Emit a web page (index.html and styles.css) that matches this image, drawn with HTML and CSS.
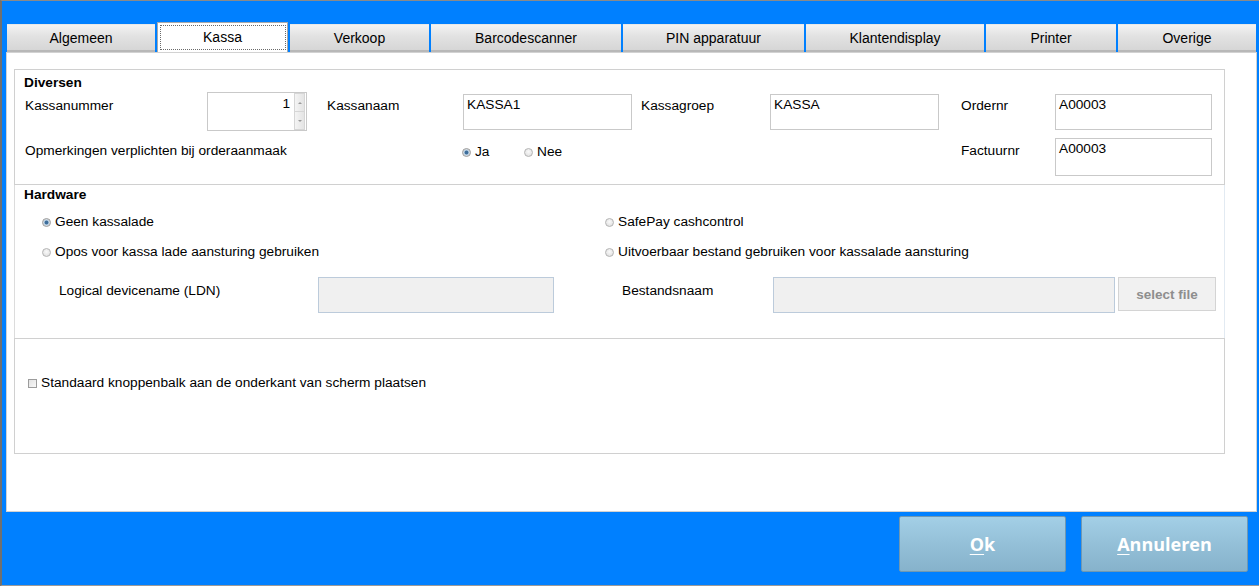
FILE: index.html
```html
<!DOCTYPE html>
<html lang="nl">
<head>
<meta charset="utf-8">
<title>Kassa instellingen</title>
<link rel="stylesheet" href="styles.css">
</head>
<body>
<div class="window">
  <div class="tabs">
    <div class="tab w-algemeen">Algemeen</div>
    <div class="tab tab-active w-kassa">Kassa</div>
    <div class="tab w-verkoop">Verkoop</div>
    <div class="tab w-barcode">Barcodescanner</div>
    <div class="tab w-pin">PIN apparatuur</div>
    <div class="tab w-klant">Klantendisplay</div>
    <div class="tab w-printer">Printer</div>
    <div class="tab w-overige">Overige</div>
  </div>

  <div class="panel">
    <div class="group diversen">
      <div class="group-title">Diversen</div>
      <div class="div-grid">
        <div class="lbl">Kassanummer</div>
        <div class="spinner">
          <span class="spin-value">1</span>
          <span class="spin-btns">
            <span class="spin-btn"><span class="arr-up"></span></span>
            <span class="spin-btn"><span class="arr-down"></span></span>
          </span>
        </div>
        <div class="lbl pl20">Kassanaam</div>
        <div class="field">KASSA1</div>
        <div class="lbl pl9">Kassagroep</div>
        <div class="field">KASSA</div>
        <div class="lbl pl22">Ordernr</div>
        <div class="field">A00003</div>

        <div class="lbl lbl-r2 span3">Opmerkingen verplichten bij orderaanmaak</div>
        <div class="radios-inline">
          <span class="opt"><span class="radio checked"></span>Ja</span>
          <span class="opt"><span class="radio"></span>Nee</span>
        </div>
        <div class="empty"></div>
        <div class="empty"></div>
        <div class="lbl lbl-r2 pl22">Factuurnr</div>
        <div class="field field-tall">A00003</div>
      </div>
    </div>

    <div class="group-plain hardware">
      <div class="group-title">Hardware</div>
      <div class="hw-radios">
        <span class="opt"><span class="radio checked"></span>Geen kassalade</span>
        <span class="opt"><span class="radio"></span>SafePay cashcontrol</span>
        <span class="opt"><span class="radio"></span>Opos voor kassa lade aansturing gebruiken</span>
        <span class="opt"><span class="radio"></span>Uitvoerbaar bestand gebruiken voor kassalade aansturing</span>
      </div>
      <div class="hw-row">
        <div class="lbl ldn-lbl">Logical devicename (LDN)</div>
        <div class="field-disabled ldn-input"></div>
        <div class="lbl file-lbl">Bestandsnaam</div>
        <div class="field-disabled file-input"></div>
        <div class="select-btn">select file</div>
      </div>
    </div>

    <div class="group options">
      <span class="opt"><span class="checkbox"></span>Standaard knoppenbalk aan de onderkant van scherm plaatsen</span>
    </div>
  </div>

  <div class="footer">
    <div class="btn"><u>O</u>k</div>
    <div class="btn"><u>A</u>nnuleren</div>
  </div>
</div>
</body>
</html>
```

FILE: styles.css
```css
html, body {
  margin: 0;
  padding: 0;
}
body {
  width: 1259px;
  height: 586px;
  overflow: hidden;
  font-family: "Liberation Sans", Arial, sans-serif;
  font-size: 13.7px;
  color: #000;
}
.window {
  box-sizing: border-box;
  width: 1259px;
  height: 586px;
  background: #0080ff;
  border-top: 1px solid #8a8a8a;
  border-left: 2px solid #707070;
  border-bottom: 1px solid #9a9a9a;
  display: flex;
  flex-direction: column;
}

/* Tabs */
.tabs {
  display: flex;
  align-items: flex-end;
  gap: 2px;
  height: 30px;
  margin: 21px 0 0 5px;
  flex: none;
}
.tab {
  box-sizing: border-box;
  height: 28px;
  background: linear-gradient(#f3f3f3, #e2e2e2 45%, #d6d6d6);
  border-top: 1px solid #e8e8e8;
  border-bottom: 2px solid #b8b8b8;
  font-size: 14px;
  display: flex;
  align-items: center;
  justify-content: center;
  padding-top: 1px;
}
.tab-active {
  position: relative;
  height: 30px;
  background: #fff;
  border: 1px solid #a9a9a9;
  border-bottom: none;
  padding-top: 0;
  padding-bottom: 1px;
}
.tab-active::after {
  content: "";
  position: absolute;
  left: 2px;
  right: 1px;
  top: 2px;
  bottom: 2px;
  border: 1px dotted #6a6a6a;
}
.w-algemeen { width: 148px; }
.w-kassa { width: 131px; }
.w-verkoop { width: 139px; }
.w-barcode { width: 190px; }
.w-pin { width: 181px; }
.w-klant { width: 178px; }
.w-printer { width: 130px; }
.w-overige { width: 138px; }

/* Panel */
.panel {
  box-sizing: border-box;
  flex: none;
  width: 1251px;
  height: 460px;
  margin-left: 4px;
  background: #fff;
  border: 1px solid #d2d2d2;
  padding: 16px 0 0 7px;
}
.group {
  box-sizing: border-box;
  width: 1211px;
  border: 1px solid #d0d0d0;
}
.group-plain {
  box-sizing: border-box;
  width: 1211px;
  border-left: 1px solid #dcdcdc;
  border-right: 1px solid #e2eaf2;
}
.group-title {
  font-weight: bold;
  font-size: 13.7px;
  line-height: 16px;
  height: 16px;
}

/* Diversen */
.diversen {
  height: 116px;
  padding: 5px 0 0 9px;
}
.div-grid {
  margin-top: 1px;
  margin-left: 1px;
  display: grid;
  grid-template-columns: 182px 100px 156px 169px 138px 169px 116px 157px;
  grid-template-rows: 39px 38px;
  row-gap: 7px;
}
.lbl {
  line-height: 16px;
  padding-top: 6px;
  white-space: nowrap;
}
.lbl-r2 { padding-top: 5px; }
.span3 { grid-column: span 3; }
.pl20 { padding-left: 20px; }
.pl9 { padding-left: 9px; }
.pl22 { padding-left: 22px; }

.field {
  box-sizing: border-box;
  align-self: start;
  margin-top: 2px;
  height: 36px;
  border: 1px solid #c9c9c9;
  padding: 2px 3px;
  line-height: 16px;
  background: #fff;
}
.field-tall {
  margin-top: 0;
  height: 38px;
}

.spinner {
  box-sizing: border-box;
  height: 39px;
  border: 1px solid #c9c9c9;
  display: flex;
  justify-content: flex-end;
  padding: 0 1px 0 0;
}
.spin-value {
  line-height: 16px;
  padding-top: 3px;
  padding-right: 4px;
}
.spin-btns {
  display: flex;
  flex-direction: column;
  width: 11px;
}
.spin-btn {
  box-sizing: border-box;
  flex: 1;
  background: linear-gradient(90deg, #f4f4f4, #e4e4e4);
  border: 1px solid #d6d6d6;
  display: flex;
  align-items: center;
  justify-content: center;
}
.spin-btn + .spin-btn { border-top: none; }
.arr-up, .arr-down {
  width: 0;
  height: 0;
  border-left: 2px solid transparent;
  border-right: 2px solid transparent;
}
.arr-up { border-bottom: 2px solid #9a9a9a; }
.arr-down { border-top: 2px solid #9a9a9a; }

.radios-inline {
  display: flex;
  align-items: flex-start;
  padding-top: 6px;
  margin-left: -1px;
  line-height: 16px;
}
.radios-inline .opt { width: 62px; }

.opt {
  display: inline-flex;
  align-items: center;
  line-height: 16px;
  white-space: nowrap;
}
.radio {
  box-sizing: border-box;
  width: 9px;
  height: 9px;
  border-radius: 50%;
  border: 1px solid #b4b4b4;
  background: radial-gradient(circle at 50% 40%, #fafafa, #dadada);
  margin-right: 4px;
  flex: none;
}
.radio.checked {
  border-color: #9a9a9a;
  background: radial-gradient(circle, #3f6e9a 0 1.6px, #a8c4dc 2.2px, #e8e8e8 3.6px);
}
.checkbox {
  box-sizing: border-box;
  width: 9px;
  height: 9px;
  border: 1px solid #9c9c9c;
  background: linear-gradient(135deg, #e2e2e2, #f8f8f8);
  margin-right: 4px;
  flex: none;
}

/* Hardware */
.hardware {
  height: 153px;
  padding: 2px 0 0 9px;
}
.hw-radios {
  margin-top: 11px;
  padding-left: 18px;
  display: grid;
  grid-template-columns: 563px auto;
  row-gap: 14px;
}
.hw-row {
  margin-top: 17px;
  padding-left: 35px;
  display: flex;
  align-items: flex-start;
}
.ldn-lbl { width: 259px; }
.file-lbl { width: 151px; margin-left: 68px; }
.field-disabled {
  box-sizing: border-box;
  height: 36px;
  background: #f0f0f0;
  border: 1px solid #bccbdb;
}
.ldn-input { width: 236px; }
.file-input { width: 342px; }
.select-btn {
  box-sizing: border-box;
  width: 98px;
  height: 34px;
  margin-left: 3px;
  background: #f1f1f1;
  border: 1px solid #d4d4d4;
  color: #8e8e8e;
  font-weight: bold;
  font-size: 13.5px;
  display: flex;
  align-items: center;
  justify-content: center;
}

/* Options */
.options {
  height: 116px;
  padding: 36px 0 0 13px;
}

/* Footer */
.footer {
  flex: 1;
  display: flex;
  justify-content: flex-end;
  align-items: flex-start;
  gap: 15px;
  padding: 4px 11px 0 0;
}
.btn {
  box-sizing: border-box;
  width: 167px;
  height: 56px;
  background: linear-gradient(#a3cfe6, #94c0d8 50%, #86b2cb);
  border: 1px solid #6f98b2;
  border-radius: 2px;
  color: #fff;
  font-family: "Open Sans", "Liberation Sans", sans-serif;
  font-weight: bold;
  font-size: 18px;
  display: flex;
  align-items: center;
  justify-content: center;
}
.btn u {
  text-decoration-thickness: 1px;
  text-underline-offset: 3px;
}
```
